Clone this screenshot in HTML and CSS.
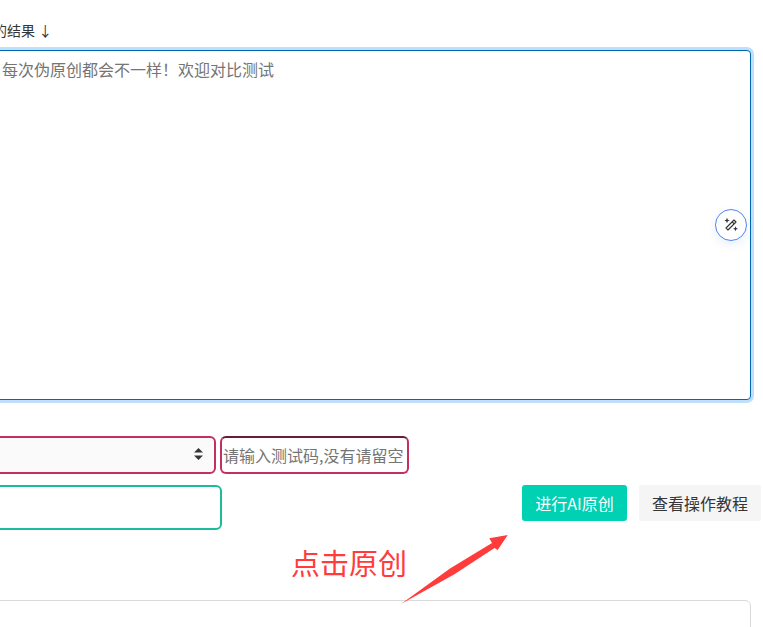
FILE: index.html
```html
<!DOCTYPE html>
<html lang="zh-CN">
<head>
<meta charset="utf-8">
<title>AI原创</title>
<link rel="stylesheet" href="styles.css">
</head>
<body>
<main class="page">
  <label class="result-label" for="result">伪原创的结果 ↓</label>
  <div class="result-wrap">
    <textarea class="result" id="result" placeholder="每次伪原创都会不一样！欢迎对比测试"></textarea>
    <button class="magic" type="button" aria-label="魔法棒">
      <svg viewBox="0 0 16 16" width="16" height="16" aria-hidden="true">
        <path d="M11 3 13 5 5 13 3 11Z M9.2 4.8 11.2 6.8" fill="none" stroke="#333" stroke-width="1.1" stroke-linejoin="round" stroke-linecap="round"/>
        <path d="M4 .8 4.8 2.7 6.7 3.5 4.8 4.3 4 6.2 3.2 4.3 1.3 3.5 3.2 2.7Z" fill="#333"/>
        <path d="M12.5 9.3 13.2 11.1 15 11.8 13.2 12.5 12.5 14.3 11.8 12.5 10 11.8 11.8 11.1Z" fill="#333"/>
      </svg>
    </button>
  </div>
  <div class="row-select">
    <div class="select-wrap">
      <select class="mode" aria-label="模式"><option></option></select>
      <svg class="updown" viewBox="0 0 9 12" width="9" height="12" aria-hidden="true">
        <path d="M4.5 0 9 4.6H0Z M0 7.4H9L4.5 12Z" fill="#363636"/>
      </svg>
    </div>
    <input class="code" type="text" placeholder="请输入测试码,没有请留空">
  </div>
  <div class="row-action">
    <input class="keyword" type="text" aria-label="关键词">
    <div class="actions">
      <button class="btn btn-primary" type="button">进行AI原创</button>
      <button class="btn btn-light" type="button">查看操作教程</button>
    </div>
  </div>
  <section class="panel"></section>
  <div class="note">
    <span class="note-text">点击原创</span>
    <svg class="note-arrow" viewBox="0 0 120 80" width="120" height="80" aria-hidden="true">
      <path d="M1 69 50 33.5 92 8 89.3 3.3 107.7 0 97.7 15 94.5 13 54 39.5Z" fill="#ff3b3b"/>
    </svg>
  </div>
</main>
</body>
</html>
```
FILE: styles.css
```css
* {
  box-sizing: border-box;
}

html,
body {
  margin: 0;
  height: 627px;
  overflow: hidden;
  background: #fff;
}

body {
  font-family: "Noto Sans CJK SC", "Liberation Sans", sans-serif;
  font-size: 16px;
  color: #363636;
}

.page {
  position: relative;
  width: 881px;
  margin-left: -120px;
  padding-top: 18px;
}

.result-label {
  display: block;
  height: 24px;
  line-height: 24px;
  margin-bottom: 8px;
  padding-left: 71px;
  font-size: 14px;
}

.result-wrap {
  position: relative;
  margin-right: 10px;
  height: 350px;
}

.result {
  display: block;
  width: 100%;
  height: 100%;
  padding: 6px 12px 8px 121px;
  border: 1px solid #0068b3;
  border-radius: 4px;
  box-shadow: 0 0 0 3px #bfdfff;
  outline: none;
  resize: none;
  font: inherit;
  line-height: 24px;
}

.result::placeholder,
.code::placeholder {
  color: #757575;
  opacity: 1;
}

.magic {
  position: absolute;
  right: 4px;
  top: 159px;
  display: flex;
  align-items: center;
  justify-content: center;
  width: 32px;
  height: 32px;
  padding: 0;
  border: 1px solid #4f86f0;
  border-radius: 50%;
  background: #fff;
  box-shadow: 0 4px 10px rgba(79, 134, 240, 0.12);
}

.row-select {
  display: flex;
  gap: 4px;
  margin-top: 36px;
  height: 38px;
}

.select-wrap {
  position: relative;
  width: 336px;
}

.mode {
  display: block;
  width: 100%;
  height: 100%;
  border: 2px solid #c2305f;
  border-radius: 6px;
  background: #fafafa;
  appearance: none;
  outline: none;
  font: inherit;
}

.updown {
  position: absolute;
  right: 13px;
  top: 12px;
}

.code {
  width: 189px;
  height: 100%;
  padding: 0 1px;
  border: 2px solid #c2305f;
  border-top-color: #6b1a3a;
  border-radius: 6px;
  background: #fff;
  outline: none;
  font: inherit;
  color: #363636;
}

.row-action {
  display: flex;
  align-items: flex-start;
  justify-content: space-between;
  margin-top: 11px;
}

.keyword {
  width: 342px;
  height: 45px;
  border: 2px solid #1abc9c;
  border-radius: 6px;
  background: #fff;
  outline: none;
}

.actions {
  display: flex;
  gap: 12px;
}

.btn {
  height: 36px;
  padding: 0 13px;
  border: 0;
  border-radius: 3px;
  font: inherit;
  line-height: 34px;
  white-space: nowrap;
}

.btn-primary {
  width: 105px;
  background: #00d1b2;
  color: #fff;
}

.btn-light {
  width: 122px;
  background: #f5f5f5;
  color: #363636;
}

.panel {
  height: 100px;
  margin: 70px 10px 0 0;
  border: 1px solid #d9d9d9;
  border-radius: 6px;
  background: #fff;
}

.note {
  position: absolute;
  left: 0;
  top: 0;
  pointer-events: none;
}

.note-text {
  position: absolute;
  left: 411px;
  top: 541px;
  font-size: 29px;
  line-height: 42px;
  color: #ff3b3b;
  white-space: nowrap;
}

.note-arrow {
  position: absolute;
  left: 520px;
  top: 535px;
  display: block;
}
```
